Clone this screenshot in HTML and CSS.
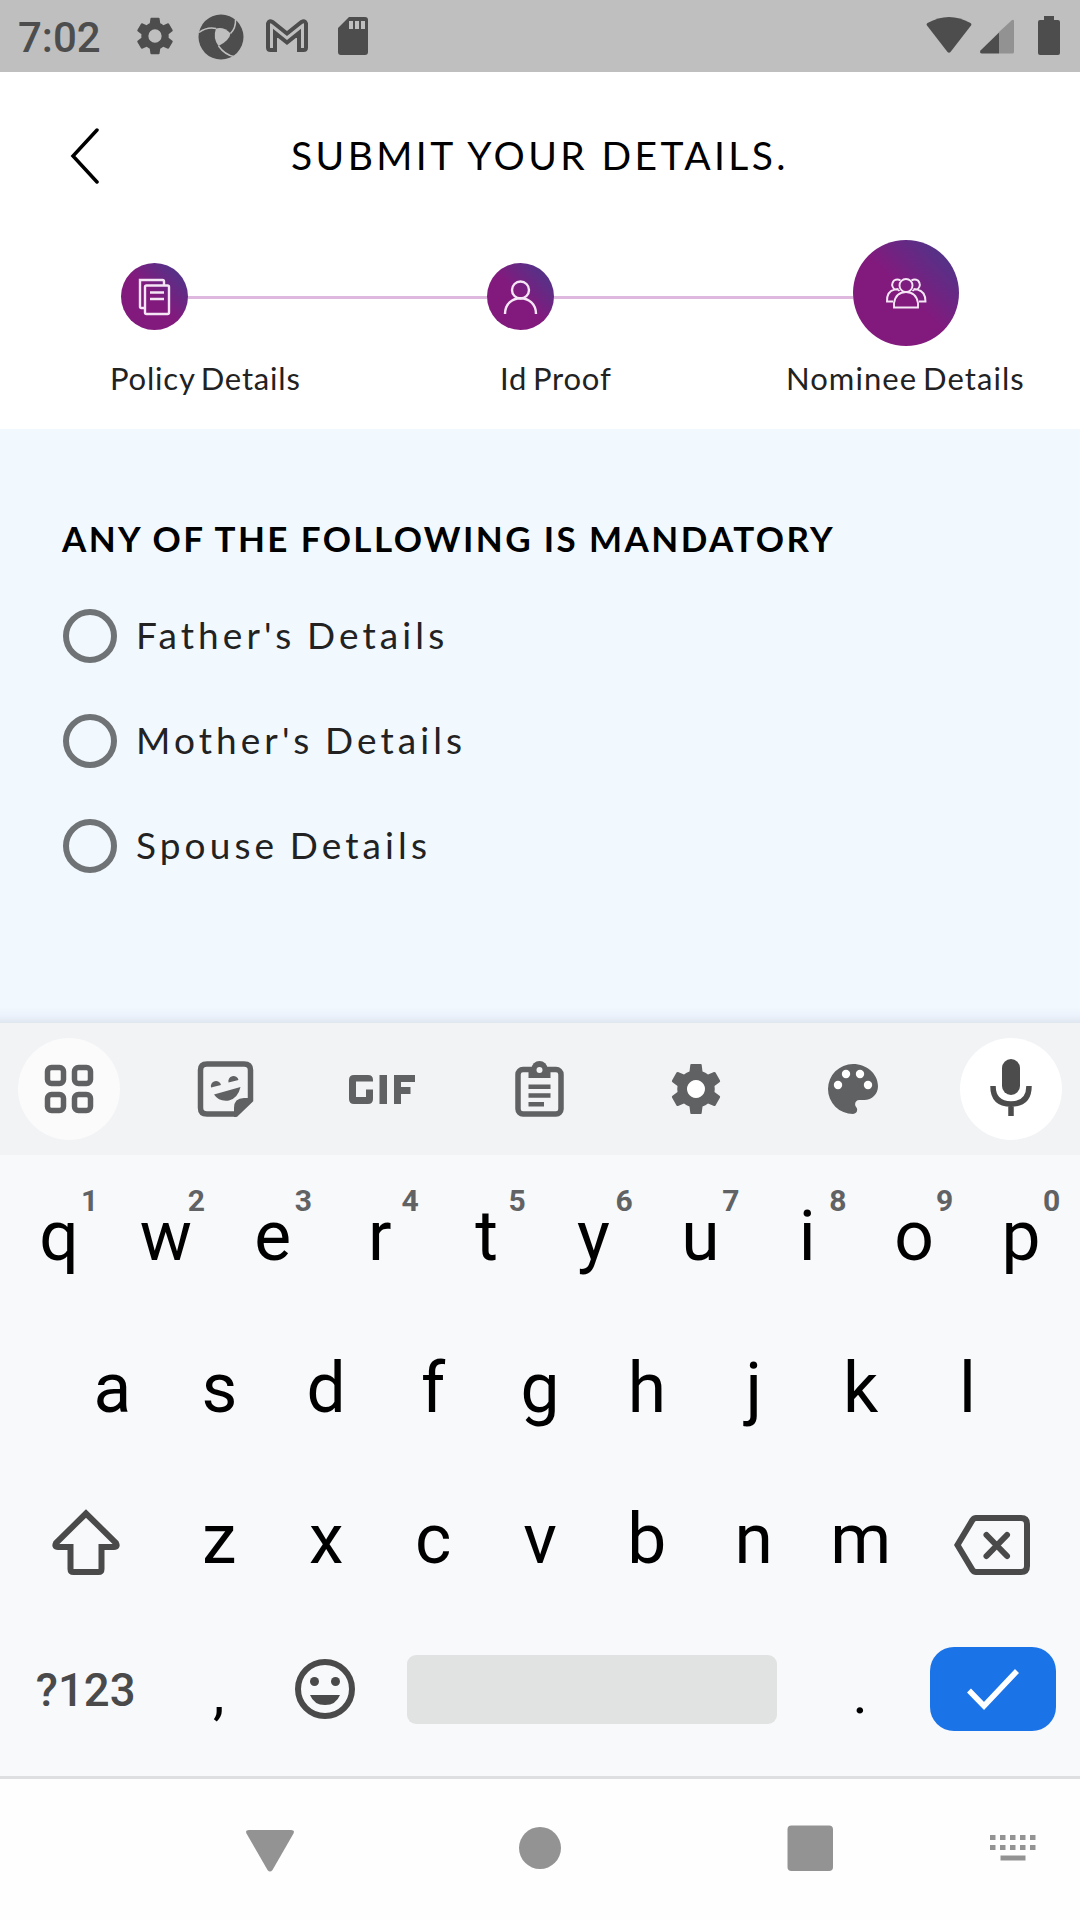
FILE: index.html
```html
<!DOCTYPE html>
<html lang="en">
<head>
<meta charset="utf-8">
<title>Submit your details</title>
<link rel="stylesheet" href="styles.css">
</head>
<body>
<div class="status">
  <span class="clock">7:02</span>
  <svg class="st-gear" viewBox="2 2 20 20"><path fill-rule="evenodd" d="M19.14 12.94c.04-.3.06-.61.06-.94s-.02-.64-.07-.94l2.03-1.58a.5.5 0 0 0 .12-.61l-1.92-3.32a.49.49 0 0 0-.59-.22l-2.39.96a7 7 0 0 0-1.62-.94l-.36-2.54A.48.48 0 0 0 13.92 2.400h-3.84a.47.47 0 0 0-.47.41l-.36 2.54c-.59.24-1.130.57-1.62.94l-2.39-.96a.48.48 0 0 0-.59.22L2.740 8.870a.47.47 0 0 0 .12.61l2.030 1.580c-.05.3-.09.63-.09.94s.02.64.07.94l-2.030 1.580a.5.5 0 0 0-.12.61l1.920 3.320c.12.22.37.29.59.22l2.390-.96c.5.38 1.030.7 1.620.94l.36 2.540c.05.24.24.41.48.41h3.840c.24 0 .44-.17.47-.41l.36-2.540a6.900 6.900 0 0 0 1.620-.94l2.390.96c.22.08.47 0 .59-.22l1.920-3.320a.47.47 0 0 0-.12-.61zM12 15.500a3.500 3.500 0 1 1 0-7 3.500 3.500 0 0 1 0 7z"/></svg>
  <svg class="st-swirl" viewBox="0 0 46 46"><circle cx="23" cy="23" r="22.500"/><path class="hole" d="M18 14.500Q26 12.500 32.500 19.500Q31.500 26.500 20.500 32Q14.500 24 18 14.500z"/><path class="cut" d="M1 18.500Q9 12.500 18 14.500M37.500 5.500Q38 14 32.500 19.500M36 42.500Q27 41 20.500 32"/></svg>
  <svg class="st-mail" viewBox="0 0 42 33"><path d="M2 28.500V4.500Q3 1 6.500 3L21 14.500 35.500 3Q39 1 40 4.500V28.500Q40 31 37.500 31H33V14L21 23.500 9 14V31H4.500Q2 31 2 28.500z"/></svg>
  <svg class="st-sd" viewBox="0 0 30 38"><path fill-rule="evenodd" d="M11 0H27Q30 0 30 3V35Q30 38 27 38H3Q0 38 0 35V11zM11 4V12H15V4zM17 4V12H21V4zM23 4V12H27V4z"/></svg>
  <svg class="st-right" viewBox="0 0 136 40"><path d="M1 9.500Q0 8 1.500 7Q23-5 44.500 7Q46 8 45 9.500L24.500 36Q23 37.500 21.500 36z"/><path class="dim" d="M73 16V37.500H86.500Q88 37.500 88 36V5Q87.500 2.800 85.500 4.500z"/><path d="M73 16.500V37.500H56Q53 37 54.500 34.500z"/><path d="M118 0H128V4H132Q134 4 134 6V37Q134 39 132 39H114Q112 39 112 37V6Q112 4 114 4H118z"/></svg>
</div>

<header class="head">
  <svg class="back" viewBox="0 0 30 56"><path d="M27 2L3 28 27 54"/></svg>
  <h1>SUBMIT YOUR DETAILS.</h1>
</header>

<div class="steps">
  <div class="dot"><svg viewBox="0 0 67 67"><path d="M23 45H20.500Q19 45 19 43.500V17H41.500Q43 17 43 18.500V22M25.500 22.500H46.500Q48 22.500 48 24V49.500Q48 51 46.500 51H25.500Q24 51 24 49.500V24Q24 22.500 25.500 22.500zM29 29.500H43M29 36H43"/></svg></div>
  <i class="line"></i>
  <div class="dot"><svg viewBox="0 0 67 67"><circle cx="33.500" cy="27" r="8.500"/><path d="M18 51C18 30 49 30 49 51"/></svg></div>
  <i class="line"></i>
  <div class="dot big"><svg viewBox="0 0 106 106"><circle cx="53" cy="45.500" r="6.500"/><path d="M41 67.500V63Q43 52 53 52T65 63V67.500zM40 61.500H34Q33.500 51.500 41.500 49.500Q45 49 46.500 51M66 61.500H72.500Q72.500 51.500 64.500 49.500Q61 49 59.500 51M47.500 40.500Q44.500 38.500 41 40.500Q37 45 41.500 49.500L45.500 49M58.500 40.500Q61.500 38.500 65 40.500Q69 45 64.500 49.500L60.500 49"/></svg></div>
</div>
<div class="labels"><span class="l1">Policy Details</span><span class="l2">Id Proof</span><span class="l3">Nominee Details</span></div>

<main class="form">
  <h2>ANY OF THE FOLLOWING IS MANDATORY</h2>
  <div class="opt"><i></i><span>Father's Details</span></div>
  <div class="opt"><i></i><span>Mother's Details</span></div>
  <div class="opt"><i></i><span>Spouse Details</span></div>
</main>

<div class="tools">
  <div class="tool soft"><svg viewBox="0 0 102 102"><g class="ln"><rect x="29.500" y="29.500" width="16" height="16" rx="4"/><rect x="56.500" y="29.500" width="16" height="16" rx="4"/><rect x="29.500" y="56.500" width="16" height="16" rx="4"/><rect x="56.500" y="56.500" width="16" height="16" rx="4"/></g></svg></div>
  <div class="tool"><svg viewBox="1 0 102 102"><path class="ln" d="M33 26H70Q76.500 26 76.500 32V62L62 76H33Q26.500 76 26.500 70V32Q26.500 26 33 26z"/><path d="M79 62L62 79H60V70Q60 60 70 60H79zM37 49.500A5 5 0 0 1 47 47zM54.500 44.500A5 5 0 0 1 64.500 42zM40 56.500L66.500 49Q64 60 55 62.500Q45 64 40 56.500z"/></svg></div>
  <div class="tool"><svg viewBox="6 0 102 102"><path d="M23 42Q23 37 28 37H42Q47 37 47 42V43.500H30V59H40V51.500H47V61Q47 66 42 66H28Q23 66 23 61zM53.500 37H61V66H53.500zM68 37H89V44H75V49H84.500V56H75V66H68z"/></svg></div>
  <div class="tool"><svg viewBox="1 0 102 102"><rect class="ln" x="30" y="31.500" width="43" height="44.500" rx="5"/><path d="M40.500 31H62.500V40H40.500z"/><circle cx="51.500" cy="31" r="8"/><circle class="hook" cx="51.500" cy="32" r="3"/><path d="M40.500 46.500H62.500V51H40.500zM40.500 55.300H62.500V59.800H40.500zM40.500 64H56V68.500H40.500z"/></svg></div>
  <div class="tool"><svg viewBox="1 0 102 102"><circle class="wells" cx="51" cy="51" r="12"/><path fill-rule="evenodd" d="M46 26Q45.500 26 45.300 27L44.500 33.500Q41.500 34.500 39 36.500L33 34Q32 33.700 31.500 34.500L27 42.500Q26.500 43.500 27.500 44.200L32.500 48Q32 51 32.500 54L27.500 57.800Q26.500 58.500 27 59.500L31.500 67.500Q32 68.300 33 68L39 65.500Q41.500 67.500 44.500 68.500L45.300 75Q45.500 76 46 76H56Q56.500 76 56.700 75L57.500 68.500Q60.500 67.500 63 65.500L69 68Q70 68.300 70.500 67.500L75 59.500Q75.500 58.500 74.500 57.800L69.500 54Q70 51 69.500 48L74.500 44.200Q75.500 43.500 75 42.500L70.500 34.500Q70 33.700 69 34L63 36.500Q60.500 34.500 57.500 33.500L56.700 27Q56.500 26 56 26zM51 42a9 9 0 1 1-.01 0z"/></svg></div>
  <div class="tool"><svg viewBox="1 0 102 102"><path d="M51 26a25 25 0 0 0 0 50c2.400 0 4.200-1.900 4.200-4.200 0-1.100-.4-2.100-1.100-2.800-.7-.7-1-1.700-1-2.800 0-2.300 1.800-4.200 4.100-4.200h5c7.700 0 13.800-6.100 13.800-13.800C76 36 64.800 26 51 26z"/><g class="wells"><circle cx="36" cy="47" r="4.200"/><circle cx="44" cy="36" r="4.200"/><circle cx="58" cy="36" r="4.200"/><circle cx="66" cy="47" r="4.200"/></g></svg></div>
  <div class="tool white"><svg viewBox="0 0 102 102"><rect x="42" y="21" width="18" height="36" rx="9"/><path class="ln" d="M33 48Q33 66 51 66T69 48M51 66V78"/></svg></div>
</div>

<div class="keys">
  <div class="row">
    <b>q<sup>1</sup></b><b>w<sup>2</sup></b><b>e<sup>3</sup></b><b>r<sup>4</sup></b><b>t<sup>5</sup></b><b>y<sup>6</sup></b><b>u<sup>7</sup></b><b>i<sup>8</sup></b><b>o<sup>9</sup></b><b>p<sup>0</sup></b>
  </div>
  <div class="row"><b>a</b><b>s</b><b>d</b><b>f</b><b>g</b><b>h</b><b>j</b><b>k</b><b>l</b></div>
  <div class="row">
    <div class="wide"><svg class="shift" viewBox="0 0 68 66"><path d="M34 4.500L4 34Q2 38 6 38H18.500V60Q18.500 63 21.500 63H46.500Q49.500 63 49.500 60V38H62Q66 38 64 34z"/></svg></div>
    <b>z</b><b>x</b><b>c</b><b>v</b><b>b</b><b>n</b><b>m</b>
    <div class="wide"><svg class="del" viewBox="0 0 76 60"><path d="M22 3H67Q73 3 73 9V51Q73 57 67 57H22Q20 57 18.500 55L3.500 30 18.500 5Q20 3 22 3z"/><path d="M32.500 20L53 41M53 20L32.500 41"/></svg></div>
  </div>
  <div class="row">
    <div class="wide sym">?123</div>
    <b class="punct">,</b>
    <div class="one"><svg class="smile" viewBox="0 0 60 60"><circle class="ring" cx="30" cy="30" r="27"/><circle cx="19.500" cy="22.500" r="4.500"/><circle cx="40.500" cy="22.500" r="4.500"/><path d="M15 36H45Q41 46 30 46T15 36z"/></svg></div>
    <div class="space"><i></i></div>
    <b class="punct">.</b>
    <div class="wide"><div class="enter"><svg viewBox="0 0 52 42"><path d="M2 21.500L17 37 50 2"/></svg></div></div>
  </div>
</div>

<nav class="nav">
  <svg viewBox="0 0 1080 141"><path d="M249 51H291Q295 51 293.500 54.500L272.500 91Q270 94 267.500 91L246.500 54.500Q245 51 249 51z"/><circle cx="540" cy="69" r="21"/><rect x="787.500" y="46.500" width="45.500" height="45.500" rx="4"/><path d="M990 56h5.500v5h-5.500zM1000 56h5.500v5h-5.500zM1010 56h5.500v5h-5.500zM1020 56h5.500v5h-5.500zM1030 56h5.500v5h-5.500zM990 66h5.500v5h-5.500zM1000 66h5.500v5h-5.500zM1010 66h5.500v5h-5.500zM1020 66h5.500v5h-5.500zM1030 66h5.500v5h-5.500zM1000.500 76.500h25v5h-25z"/></svg>
</nav>
</body>
</html>
```
FILE: styles.css
```css
* { box-sizing: border-box; }
body { margin: 0; width: 1080px; height: 1920px; background: #fff; font-family: Lato, sans-serif; overflow: hidden; display: flex; flex-direction: column; }
svg { display: block; flex: none; }
h1, h2 { margin: 0; font-weight: 400; }

.status { height: 72px; background: #bfbfbf; display: flex; align-items: flex-start; padding-left: 18px; fill: #4d4d4d; color: #4d4d4d; }
.clock { font: 500 42px/72px Roboto, sans-serif; width: 118px; padding-top: 2px; }
.st-gear { width: 38px; height: 38px; margin-top: 17px; }
.st-swirl { width: 46px; height: 46px; margin: 14px 0 0 24px; }
.st-swirl .hole { fill: #bfbfbf; }
.st-swirl .cut { fill: none; stroke: #bfbfbf; stroke-width: 1.5; }
.st-mail { width: 42px; height: 33px; margin: 19px 0 0 22px; fill: none; stroke: #4d4d4d; stroke-width: 4; }
.st-sd { width: 30px; height: 38px; margin: 17px 0 0 30px; }
.st-right { width: 136px; height: 40px; margin: 16px 18px 0 auto; }
.st-right .dim { fill: #929292; }

.head { height: 167px; display: flex; align-items: flex-start; padding-left: 70px; }
.back { width: 30px; height: 56px; margin-top: 56px; fill: none; stroke: #000; stroke-width: 3.5; stroke-linecap: round; }
h1 { font-size: 39px; line-height: 48px; letter-spacing: 3.400px; margin: 59px 0 0 191px; white-space: nowrap; }

.steps { height: 107px; display: flex; padding-left: 121px; align-items: center; }
.dot { width: 67px; height: 67px; border-radius: 50%; margin-top: 8px; background: linear-gradient(45deg, #821a7e 50%, #453a8a 98%); fill: none; stroke: #f4e6f4; stroke-width: 2.4; }
.dot.big { width: 106px; height: 106px; margin-top: 0; stroke-width: 1.900; }
.line { width: 299px; height: 3px; background: #dfb8df; margin-top: 10px; }
.labels { height: 83px; display: flex; color: #222; font-size: 31px; line-height: 36px; letter-spacing: .8px; word-spacing: -3px; padding: 14px 0 0 110px; white-space: nowrap; }
.l1 { width: 390px; }
.l2 { width: 286px; }
.l3 { letter-spacing: 1.05px; }

.form { height: 594px; padding: 87px 0 0 62px; background: linear-gradient(#f1f8fe 0 578px, #ecf3fc 586px, #e0e7ef 594px); }
h2 { font-size: 35px; font-weight: 700; line-height: 44px; letter-spacing: 2.400px; white-space: nowrap; margin-bottom: 49px; }
.opt { display: flex; align-items: center; height: 54px; margin-bottom: 51px; font-size: 37px; color: #222; letter-spacing: 4.100px; word-spacing: -2px; white-space: nowrap; }
.opt i { width: 54px; height: 54px; border: 6px solid #707375; border-radius: 50%; margin: 0 19px 0 1px; }
.opt span { padding-bottom: 4px; }

.tools { height: 132px; background: #f1f3f5; display: flex; justify-content: space-between; align-items: center; padding: 0 18px; fill: #606163; }
.tool { width: 102px; height: 102px; border-radius: 50%; }
.tool .ln { fill: none; stroke: #606163; stroke-width: 5.500; }
.tool .wells { fill: #fff; }
.tool .hook { fill: #f1f3f5; }
.soft { background: #fbfbfb; }
.white { background: #fff; fill: #4c4c4c; }
.white .ln { stroke: #4c4c4c; }

.keys { height: 624px; background: #f8f9fb; border-bottom: 3px solid #dedfe0; padding: 9px 5.500px 0; font-family: Roboto, sans-serif; }
.row { height: 151.500px; display: flex; justify-content: center; }
.row b { width: 106.900px; text-align: center; font-weight: 400; font-size: 69.500px; line-height: 146px; position: relative; }
.row sup { position: absolute; left: 74px; width: 20px; top: 20px; font-size: 30px; line-height: 34px; font-weight: 700; color: #606264; }
.wide { width: 160.350px; display: flex; justify-content: center; color: #4a4a4a; }
.shift { width: 68px; height: 66px; margin-top: 42px; fill: none; stroke: #4a4a4a; stroke-width: 6; }
.del { width: 76px; height: 60px; margin: 48px 0 0 -4px; fill: none; stroke: #4a4a4a; stroke-width: 6; stroke-linecap: round; }
.sym { font-size: 45.500px; font-weight: 500; line-height: 143px; }
.row .punct { font-size: 58px; line-height: 149px; padding-right: 1px; }
.one { width: 106.900px; display: flex; justify-content: center; fill: #4a4a4a; }
.smile { width: 60px; height: 60px; margin: 40px 2px 0 0; }
.ring { fill: none; stroke: #4a4a4a; stroke-width: 6; }
.space { width: 427.600px; display: flex; justify-content: center; }
.space i { width: 370px; height: 69px; border-radius: 9px; background: #e1e3e2; margin: 36px 2px 0 0; }
.enter { width: 126px; height: 84px; border-radius: 24px; background: #1b73e8; margin: 28px 2px 0 0; display: flex; align-items: center; justify-content: center; }
.enter svg { width: 52px; height: 42px; margin-top: 3px; fill: none; stroke: #fff; stroke-width: 5.500; }

.nav { height: 141px; background: #fefefe; fill: #939393; }
```
